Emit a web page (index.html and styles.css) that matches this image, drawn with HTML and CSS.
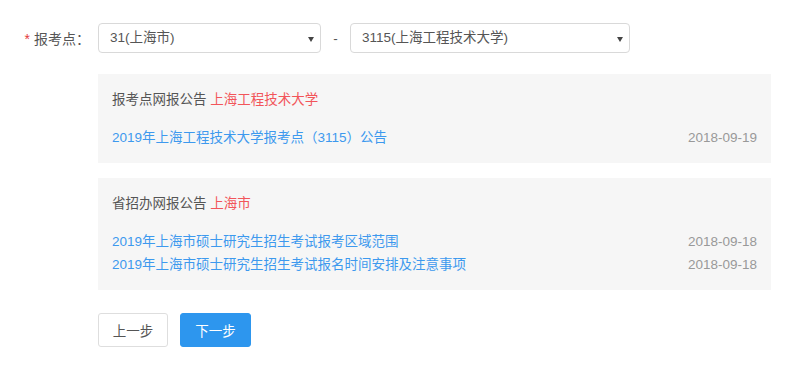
FILE: index.html
```html
<!DOCTYPE html>
<html lang="zh-CN">
  <head>
    <meta charset="utf-8">
    <title>报考点选择</title>
    <link rel="stylesheet" href="styles.css">
  </head>
  <body>
    <div class="form-row">
      <label class="form-label"><span class="required">*</span>报考点：</label>
      <div class="select select-province">
        <span>31(上海市)</span>
        <i class="caret"></i>
      </div>
      <span class="dash">-</span>
      <div class="select select-school">
        <span>3115(上海工程技术大学)</span>
        <i class="caret"></i>
      </div>
    </div>

    <div class="notices">
      <div class="notice">
        <h4 class="notice-title">报考点网报公告 <span class="place">上海工程技术大学</span></h4>
        <ul class="notice-list">
          <li><a href="#">2019年上海工程技术大学报考点（3115）公告</a><span class="date">2018-09-19</span></li>
        </ul>
      </div>
      <div class="notice">
        <h4 class="notice-title">省招办网报公告 <span class="place">上海市</span></h4>
        <ul class="notice-list">
          <li><a href="#">2019年上海市硕士研究生招生考试报考区域范围</a><span class="date">2018-09-18</span></li>
          <li><a href="#">2019年上海市硕士研究生招生考试报名时间安排及注意事项</a><span class="date">2018-09-18</span></li>
        </ul>
      </div>

      <div class="actions">
        <button class="btn">上一步</button>
        <button class="btn btn-primary">下一步</button>
      </div>
    </div>
  </body>
</html>
```

FILE: styles.css
```css
body {
  margin: 0;
  font-family: "Liberation Sans", "Noto Sans CJK SC", sans-serif;
  font-size: 13.5px;
  color: #555;
  background: #fff;
}

.form-row {
  display: flex;
  align-items: center;
  padding-top: 23px;
}

.form-label {
  width: 90px;
  margin-right: 8px;
  text-align: right;
  font-size: 14px;
  color: #555;
}

.required {
  color: #e4393c;
  margin-right: 4px;
}

.select {
  position: relative;
  box-sizing: border-box;
  height: 30px;
  line-height: 28px;
  padding: 0 12px 0 11px;
  border: 1px solid #d9d9d9;
  border-radius: 4px;
  color: #555;
}

.select-province {
  width: 223px;
}

.select-school {
  width: 280px;
}

.caret {
  position: absolute;
  right: 6px;
  top: 13px;
  width: 0;
  height: 0;
  border-left: 3px solid transparent;
  border-right: 3px solid transparent;
  border-top: 5px solid #444;
}

.dash {
  width: 29px;
  text-align: center;
  color: #555;
}

.notices {
  margin-left: 98px;
  width: 673px;
  padding-top: 21px;
}

.notice {
  background: #f6f6f6;
  padding: 16px 14px 14px;
  margin-bottom: 15px;
}

.notice-title {
  margin: 0;
  font-size: 13.5px;
  font-weight: normal;
  line-height: 20px;
  color: #555;
}

.place {
  color: #f2555a;
}

.notice-list {
  list-style: none;
  margin: 16px 0 0;
  padding: 0;
}

.notice-list li {
  display: flex;
  justify-content: space-between;
  line-height: 23px;
}

.notice-list a {
  color: #3d99ee;
  text-decoration: none;
}

.date {
  color: #999;
}

.actions {
  display: flex;
  gap: 12px;
  padding-top: 8px;
}

.btn {
  box-sizing: border-box;
  width: 70px;
  height: 34px;
  border: 1px solid #dedede;
  border-radius: 3px;
  background: #fff;
  color: #555;
  font-family: "Liberation Sans", "Noto Sans CJK SC", sans-serif;
  font-size: 13.5px;
  padding: 0;
}

.btn-primary {
  width: 71px;
  background: #2d96ee;
  border-color: #2d96ee;
  color: #fff;
}
```
